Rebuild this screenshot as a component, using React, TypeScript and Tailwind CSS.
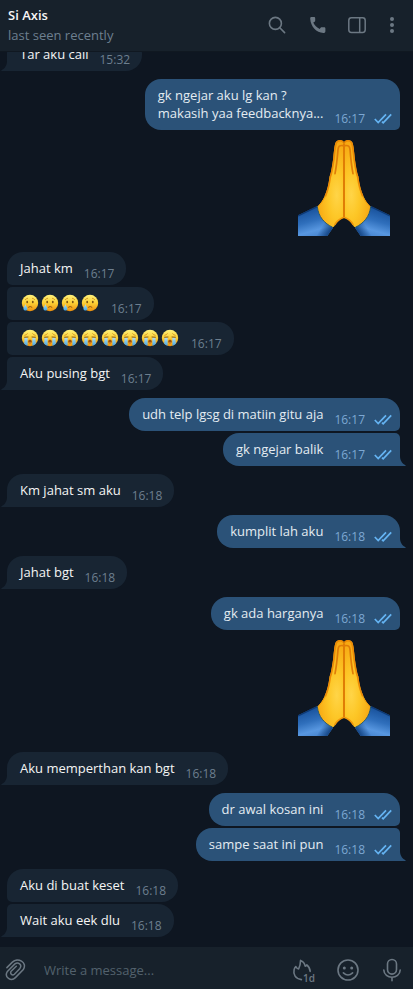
import type { ReactNode } from "react";

type Message = {
  text?: string[];
  emoji?: "cry" | "sob";
  count?: number;
  sticker?: boolean;
  time: string;
};

type Group = { from: "me" | "them"; messages: Message[] };

const groups: Group[] = [
  { from: "them", messages: [{ text: ["Tar aku call"], time: "15:32" }] },
  {
    from: "me",
    messages: [
      { text: ["gk ngejar aku lg kan ?", "makasih yaa feedbacknya..."], time: "16:17" },
      { sticker: true, time: "16:17" },
    ],
  },
  {
    from: "them",
    messages: [
      { text: ["Jahat km"], time: "16:17" },
      { emoji: "cry", count: 4, time: "16:17" },
      { emoji: "sob", count: 8, time: "16:17" },
      { text: ["Aku pusing bgt"], time: "16:17" },
    ],
  },
  {
    from: "me",
    messages: [
      { text: ["udh telp lgsg di matiin gitu aja"], time: "16:17" },
      { text: ["gk ngejar balik"], time: "16:17" },
    ],
  },
  { from: "them", messages: [{ text: ["Km jahat sm aku"], time: "16:18" }] },
  { from: "me", messages: [{ text: ["kumplit lah aku"], time: "16:18" }] },
  { from: "them", messages: [{ text: ["Jahat bgt"], time: "16:18" }] },
  {
    from: "me",
    messages: [
      { text: ["gk ada harganya"], time: "16:18" },
      { sticker: true, time: "16:18" },
    ],
  },
  { from: "them", messages: [{ text: ["Aku memperthan kan bgt"], time: "16:18" }] },
  {
    from: "me",
    messages: [
      { text: ["dr awal kosan ini"], time: "16:18" },
      { text: ["sampe saat ini pun"], time: "16:18" },
    ],
  },
  {
    from: "them",
    messages: [
      { text: ["Aku di buat keset"], time: "16:18" },
      { text: ["Wait aku eek dlu"], time: "16:18" },
    ],
  },
];

/* Shared gradients for the emoji drawings */
function Gradients() {
  return (
    <svg className="absolute size-0" aria-hidden="true">
      <defs>
        <linearGradient id="face" x1="0" y1="0" x2="0" y2="1">
          <stop offset="0" stopColor="#fff27a" />
          <stop offset="0.5" stopColor="#fccf36" />
          <stop offset="1" stopColor="#ee8f0c" />
        </linearGradient>
        <linearGradient id="tear" x1="0" y1="0" x2="0" y2="1">
          <stop offset="0" stopColor="#b9e0ee" />
          <stop offset="1" stopColor="#3fa6e8" />
        </linearGradient>
        <radialGradient id="palm" gradientUnits="userSpaceOnUse" cx="155" cy="180" r="170" gradientTransform="translate(98 0) scale(0.37 1)">
          <stop offset="0" stopColor="#ffd548" />
          <stop offset="0.4" stopColor="#fdc727" />
          <stop offset="1" stopColor="#f6a510" />
        </radialGradient>
        <linearGradient id="sleeve" gradientUnits="userSpaceOnUse" x1="68" y1="222" x2="92" y2="303">
          <stop offset="0" stopColor="#17509a" />
          <stop offset="0.45" stopColor="#2f6fbc" />
          <stop offset="0.8" stopColor="#5897e0" />
          <stop offset="1" stopColor="#4a88d2" />
        </linearGradient>
        <linearGradient id="cuff" gradientUnits="userSpaceOnUse" x1="108" y1="278" x2="138" y2="296">
          <stop offset="0" stopColor="#0b3a78" stopOpacity="0" />
          <stop offset="1" stopColor="#0b3a78" />
        </linearGradient>
      </defs>
    </svg>
  );
}

function Cry() {
  return (
    <svg viewBox="0 0 20 20" className="size-5">
      <circle cx="10" cy="10" r="8.2" fill="url(#face)" />
      <path d="M5 7Q6.4 5.4 8 5.2M12 5.2Q13.6 5.4 15 7" fill="none" stroke="#c58a1c" strokeWidth="0.8" />
      <ellipse cx="7.2" cy="9" rx="0.9" ry="1.3" fill="#7a5212" />
      <ellipse cx="12.8" cy="9" rx="0.9" ry="1.3" fill="#7a5212" />
      <path d="M8.2 14.4Q10.2 12.6 12.2 14.4" fill="none" stroke="#95560d" strokeWidth="1" />
      <path d="M5.4 11C5.6 12.8 7.5 14.2 7.4 15.8C7.2 18.2 3.6 18.2 3.4 15.8C3.4 14.3 5 12.8 5.4 11Z" fill="url(#tear)" />
    </svg>
  );
}

function Sob() {
  return (
    <svg viewBox="0 0 20 20" className="size-5">
      <circle cx="10" cy="10" r="8.2" fill="url(#face)" />
      <path d="M4.6 9.6H7.6V17.8Q5.6 17.2 4.2 15.8ZM15.4 9.6H12.4V17.8Q14.4 17.2 15.8 15.8Z" fill="url(#tear)" />
      <path d="M4.4 7.4Q6.4 7 7.6 5.4M15.6 7.4Q13.6 7 12.4 5.4" fill="none" stroke="#c58a1c" strokeWidth="0.8" />
      <path d="M4.2 9.3L8.4 9M15.8 9.3L11.6 9" fill="none" stroke="#8a5a12" strokeWidth="1" />
      <path d="M8.2 13.6C8.2 11.2 11.8 11.2 11.8 13.6C11.8 16 8.2 16 8.2 13.6Z" fill="#96520d" />
      <path d="M9 14.4Q10 13.4 11 14.4Q10 15.4 9 14.4Z" fill="#e2824a" />
    </svg>
  );
}

function Hand() {
  return (
    <>
      <path d="M39 241L97 213Q102 252 144 278L127 303H39Z" fill="url(#sleeve)" />
      <path d="M39 241L97 213Q102 252 144 278L127 303H39Z" fill="url(#cuff)" />
      <path d="M39 243L97 215" stroke="#0e3a75" strokeWidth="4" />
      <path
        d="M177 25C172 14 157 13 152 22C148 31 147 50 145 68C142 92 139 112 134 124C131 148 127 166 119 183C113 197 106 206 97 215C100 245 118 265 143 277C149 275 153 263 160 257C166 251 173 252 177 244Z"
        fill="url(#palm)"
      />
      <path
        d="M176 23C171 15 158 15 154 24C150 34 149 52 147 70C144 92 141 112 136 126C133 148 129 166 121 184"
        fill="none"
        stroke="#ec8a06"
        strokeWidth="5"
      />
      <path d="M121 184Q112 203 99 215" fill="none" stroke="#f29a0b" strokeWidth="3" />
      <path d="M174 32C164 30 160 34 159 44C157 68 155 92 150 116" fill="none" stroke="#df7c08" strokeWidth="5" strokeLinecap="round" />
      <path d="M97 215C100 245 118 265 143 277" fill="none" stroke="#285a6e" strokeWidth="3" />
      <path d="M149 270Q157 254 177 247" fill="none" stroke="#ef960b" strokeWidth="5" />
    </>
  );
}

function FoldedHands() {
  return (
    <svg viewBox="39 15 276 288" className="h-24 w-[92px]" role="img" aria-label="Folded hands">
      <Hand />
      <g transform="translate(354 0) scale(-1 1)">
        <Hand />
      </g>
      <path d="M177 25V246" stroke="#e07d05" strokeWidth="6" />
    </svg>
  );
}

function Checks() {
  return (
    <svg viewBox="0 0 18 12" className="h-3 w-[18px]" fill="none" stroke="#65b4f3" strokeWidth="1.7" role="img" aria-label="Read">
      <path d="M0.8 6L4.2 9.6L12 1.4M8 8.6L9.2 9.8L17.2 1.4" />
    </svg>
  );
}

function Tail({ mine }: { mine: boolean }) {
  return (
    <svg
      viewBox="0 0 6 10"
      className={mine ? "absolute bottom-0 left-full h-2.5 w-1.5 -scale-x-100" : "absolute right-full bottom-0 h-2.5 w-1.5"}
      aria-hidden="true"
    >
      <path d="M6 0C6 4 4 7.6 0.4 9.2Q0 9.8 0.8 10H6Z" fill={mine ? "#2b5278" : "#182533"} />
    </svg>
  );
}

function corners(mine: boolean, first: boolean, last: boolean) {
  if (mine) {
    return `rounded-l-2xl ${first ? "rounded-tr-2xl" : "rounded-tr-[5px]"} ${last ? "rounded-br-none" : "rounded-br-[5px]"}`;
  }
  return `rounded-r-2xl ${first ? "rounded-tl-2xl" : "rounded-tl-[5px]"} ${last ? "rounded-bl-none" : "rounded-bl-[5px]"}`;
}

function Bubble({ message, mine, first, last }: { message: Message; mine: boolean; first: boolean; last: boolean }) {
  if (message.sticker) {
    return (
      <li className="self-end px-2.5 py-2">
        <FoldedHands />
      </li>
    );
  }
  const Emoji = message.emoji === "cry" ? Cry : Sob;
  return (
    <li
      className={`relative flex items-end pl-[13px] ${corners(mine, first, last)} ${
        mine ? "gap-[11px] self-end bg-[#2b5278] pr-2" : "gap-[11px] self-start bg-[#182533] pr-3"
      }`}
    >
      {message.emoji ? (
        <span className="flex h-[33px] items-start pt-1.5" role="img" aria-label={message.emoji === "cry" ? "Crying faces" : "Sobbing faces"}>
          {Array.from({ length: message.count ?? 1 }, (_, i) => (
            <Emoji key={i} />
          ))}
        </span>
      ) : (
        <p className={`pt-[7px] pb-2 text-[13px] leading-[18px] ${mine ? "text-[#e4ecf2]" : "text-[#f5f5f5]"}`}>
          {message.text?.map((line) => (
            <span key={line} className="block">
              {line}
            </span>
          ))}
        </p>
      )}
      <span className={`flex items-center gap-[9px] pb-[3px] text-xs leading-4 ${mine ? "text-[#7da8d3]" : "text-[#6d7f8f]"}`}>
        <time>{message.time}</time>
        {mine && <Checks />}
      </span>
      {last && <Tail mine={mine} />}
    </li>
  );
}

function IconButton({ label, className, children }: { label: string; className: string; children: ReactNode }) {
  return (
    <button type="button" aria-label={label} className={`flex h-10 items-center justify-center text-[#6c7883] ${className}`}>
      {children}
    </button>
  );
}

export default function App() {
  return (
    <div className="flex h-screen flex-col bg-[#0e1621] font-['Open_Sans','Noto_Sans',sans-serif]">
      <Gradients />
      <header className="flex h-[52px] shrink-0 items-center border-b border-[#101821] bg-[#17212b] pr-1.5 pb-0.5 pl-2">
        <div className="min-w-0 flex-1 text-[13px] leading-5">
          <h1 className="font-semibold text-[#f5f5f5]">Si Axis</h1>
          <p className="text-[#6d7f8f]">last seen recently</p>
        </div>
        <IconButton label="Search" className="w-10">
          <svg viewBox="0 0 20 20" className="size-5" fill="none" stroke="currentColor" strokeWidth="1.6" strokeLinecap="round">
            <circle cx="8.4" cy="8.4" r="6" />
            <path d="M12.8 12.8L17.6 17.6" />
          </svg>
        </IconButton>
        <IconButton label="Call" className="w-10">
          <svg viewBox="0 0 20 20" className="size-5" fill="currentColor">
            <path d="M3.2 3.8C3.1 2.6 3.6 2.1 4.4 2.1H6.8C7.8 2.1 8.2 2.6 8.2 3.5V5.5C8.2 6.5 7.5 7 6.3 7.5C7.4 10.3 9.9 12.8 12.8 14C13.3 12.9 13.8 12.3 14.8 12.3H17C17.9 12.3 18.4 12.8 18.4 13.7V16C18.4 17.4 17.7 18 16.3 18C9.4 17.6 3.8 11.8 3.2 3.8Z" />
          </svg>
        </IconButton>
        <IconButton label="Toggle side panel" className="w-10">
          <svg viewBox="0 0 20 20" className="size-5" fill="none" stroke="currentColor" strokeWidth="1.5">
            <rect x="1.8" y="2.8" width="16.4" height="14.6" rx="2.6" />
            <path d="M12.7 2.8V17.4" />
          </svg>
        </IconButton>
        <IconButton label="More" className="w-[30px]">
          <svg viewBox="0 0 20 20" className="size-5" fill="currentColor">
            <circle cx="10" cy="4" r="2" />
            <circle cx="10" cy="10" r="2" />
            <circle cx="10" cy="16" r="2" />
          </svg>
        </IconButton>
      </header>

      <main className="flex min-h-0 flex-1 flex-col justify-end gap-2 overflow-hidden px-[7px] pb-2.5">
        {groups.map((group, g) => (
          <ul key={g} className={`flex shrink-0 flex-col gap-0.5 ${group.from === "me" ? "pr-1.5" : ""}`}>
            {group.messages.map((message, i) => (
              <Bubble
                key={i}
                message={message}
                mine={group.from === "me"}
                first={i === 0}
                last={i === group.messages.length - 1}
              />
            ))}
          </ul>
        ))}
      </main>

      <footer className="flex h-[42px] shrink-0 items-center bg-[#17212b] pt-1 pr-0.5">
        <IconButton label="Attach" className="w-8">
          <svg viewBox="0 0 22 24" className="h-6 w-[22px]" fill="none" stroke="currentColor" strokeWidth="1.5" strokeLinecap="round">
            <path d="M1.9 9.6L7.4 4.1C12.5-0.8 22.9 3.9 18.3 11.6L10.4 19.6C6.3 23.9-1.3 19.5 2.4 13.4L9.9 5.9C13.2 3.5 17.5 6.8 14.9 10.4L9.4 16.2C7.4 18 4.5 15.7 6.2 13.2L11.3 8.2" />
          </svg>
        </IconButton>
        <input
          type="text"
          aria-label="Message"
          placeholder="Write a message..."
          className="h-8 min-w-0 flex-1 bg-transparent pl-3 text-[13px] text-[#f5f5f5] outline-none placeholder:text-[#53616d]"
        />
        <IconButton label="Auto-delete after one day" className="relative w-11">
          <svg viewBox="0 0 24 24" className="size-6" fill="none" stroke="currentColor" strokeWidth="1.6" strokeLinecap="round" strokeLinejoin="round">
            <path d="M10.4 21.6C4.4 20.8 2 16.5 3.1 11.6Q3.6 9.8 4.8 8.5Q5.8 10.6 7.6 11Q9.4 7.5 9.6 2.4Q13.2 3.6 14.2 8.2Q15.2 8 15.8 6.8Q19 9.6 19.2 13.4" />
          </svg>
          <span className="absolute right-2.5 bottom-1.5 text-[10px] leading-3 font-semibold">1d</span>
        </IconButton>
        <IconButton label="Emoji" className="w-[46px]">
          <svg viewBox="0 0 24 24" className="size-6" fill="none" stroke="currentColor" strokeWidth="1.6" strokeLinecap="round">
            <circle cx="12" cy="12" r="10" />
            <path d="M7.4 14.8Q12 19.2 16.6 14.8" />
            <circle cx="8.3" cy="10" r="1.5" fill="currentColor" stroke="none" />
            <circle cx="15.7" cy="10" r="1.5" fill="currentColor" stroke="none" />
          </svg>
        </IconButton>
        <IconButton label="Record voice message" className="w-10">
          <svg viewBox="0 0 24 24" className="size-6" fill="none" stroke="currentColor" strokeWidth="1.6" strokeLinecap="round">
            <rect x="8.5" y="1.5" width="9" height="14.6" rx="4.5" />
            <path d="M4.8 12C5.2 21.6 20.8 21.6 21.2 12M13 19.4V22.8" />
          </svg>
        </IconButton>
      </footer>
    </div>
  );
}
